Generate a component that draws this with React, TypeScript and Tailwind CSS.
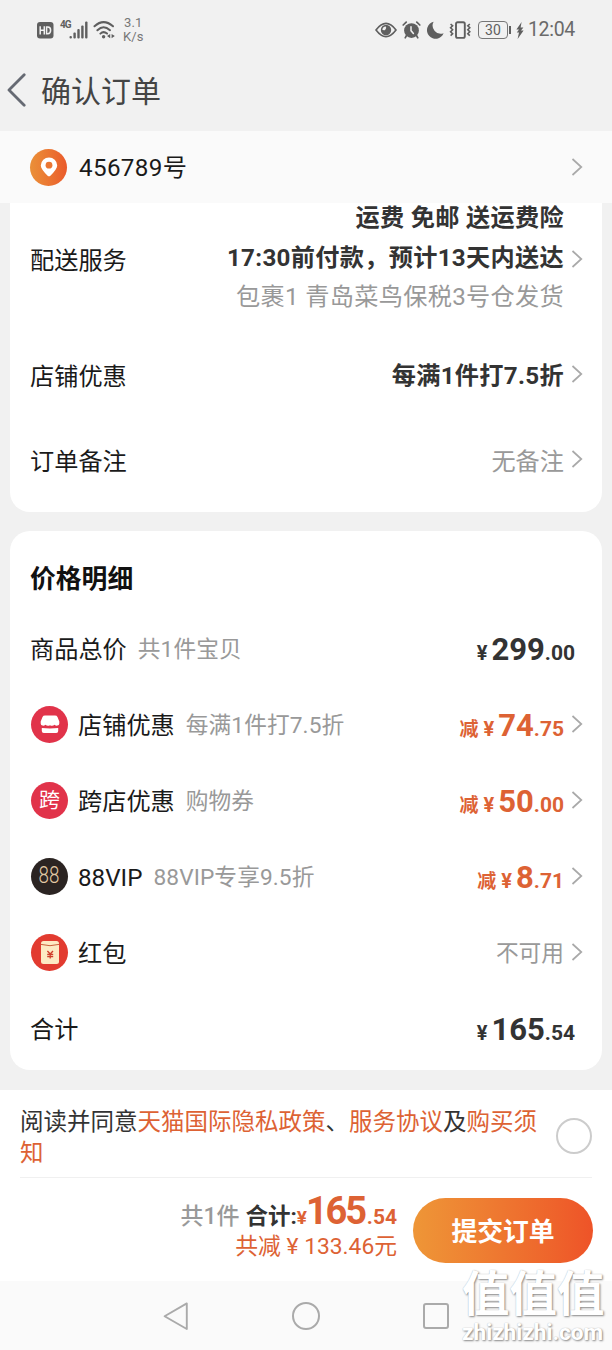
import type { ReactNode } from "react";

const ORANGE_TEXT = "text-[#dd6234]"

function IconChevron() {
  return (
    <svg width="12" height="18" viewBox="0 0 12 18" fill="none" stroke="#a9a9a9" strokeWidth="1.7" className="shrink-0">
      <path d="M1.5 1L10.3 9L1.5 17" />
    </svg>
  )
}

function StatusBar() {
  return (
    <div className="h-[60px] flex items-center pl-[37px] pr-[37px] text-[#5f5f5f]">
      {/* HD */}
      <svg width="17" height="18" viewBox="0 0 17 18" className="mr-[6px]">
        <rect x="0" y="1" width="16.5" height="16.5" rx="3" fill="#5f5f5f" />
        <path d="M3.2 5.2V13.4M7.3 5.2V13.4M3.2 9.2H7.3M9.6 5.9V12.7H10.9Q13.6 12.7 13.6 9.3Q13.6 5.9 10.9 5.9Z" fill="none" stroke="#f1f1f1" strokeWidth="1.5" />
      </svg>
      <span className="w-[9px] -mt-[11px] text-[10px] font-bold leading-none tracking-[-1px]">4G</span>
      {/* signal */}
      <svg width="19" height="18" viewBox="0 0 19 18" fill="#5f5f5f" className="mr-[5px]">
        <rect x="0.5" y="15" width="2.4" height="2.6" rx="1" />
        <rect x="4.4" y="11.4" width="2.4" height="6.2" rx="1" />
        <rect x="8.3" y="8" width="2.4" height="9.6" rx="1" />
        <rect x="12.2" y="4.4" width="2.4" height="13.2" rx="1" />
        <rect x="16.1" y="0.6" width="2.4" height="17" rx="1" />
      </svg>
      {/* wifi */}
      <svg width="23" height="18" viewBox="0 0 23 18" fill="none" stroke="#5f5f5f" strokeWidth="2" strokeLinecap="round" className="mr-[7px]">
        <path d="M1.5 5.3Q10.5 -3 20 5.3M4.4 9.2Q10.5 3.4 17 9.2M7.4 12.6Q10.5 9.6 14 12.6" />
        <circle cx="10.6" cy="15.8" r="1.7" fill="#5f5f5f" stroke="none" />
        <path d="M17.2 12.9V17.3L14 15.1ZM18.6 12.9V17.3L21.8 15.1Z" fill="#5f5f5f" stroke="none" />
      </svg>
      <div className="text-[13px] leading-[14.5px] tracking-[0.1px] text-center text-[#777]">
        <p>3.1</p>
        <p>K/s</p>
      </div>

      <div className="ml-auto flex items-center">
        {/* eye */}
        <svg width="22" height="16" viewBox="0 0 22 16" className="mr-[5px]">
          <path d="M1 8Q11 -5.2 21 8Q11 21.2 1 8Z" fill="none" stroke="#5f5f5f" strokeWidth="1.6" />
          <circle cx="11" cy="8" r="5.2" fill="#5f5f5f" />
          <path d="M10.4 4.2A2.2 2.2 0 0 1 7.2 7.6A4 4 0 0 1 10.4 4.2Z" fill="#f1f1f1" />
        </svg>
        {/* alarm */}
        <svg width="19" height="18" viewBox="0 0 19 18" fill="none" stroke="#5f5f5f" strokeWidth="1.7" strokeLinecap="round" className="mr-[6px]">
          <circle cx="9.5" cy="9.6" r="7.4" fill="#5f5f5f" stroke="none" />
          <path d="M1.2 4L4.2 1.2M17.8 4L14.8 1.2M4.5 14.5L3.2 16.8M14.5 14.5L15.8 16.8" />
          <path d="M9 5.8V9.6L11.4 12.4" stroke="#f1f1f1" strokeWidth="1.5" />
        </svg>
        {/* moon */}
        <svg width="17" height="18" viewBox="0 0 17 18" fill="#5f5f5f" className="mr-[5px]">
          <path d="M6.6 0.8A8.6 8.6 0 1 0 16.6 12.3A8.2 8.2 0 0 1 6.6 0.8Z" />
        </svg>
        {/* vibrate */}
        <svg width="23" height="18" viewBox="0 0 23 18" fill="none" stroke="#5f5f5f" strokeWidth="1.6" className="mr-[6px]">
          <rect x="7" y="1.3" width="8.8" height="15.6" rx="1.6" strokeWidth="1.9" />
          <path d="M1.6 3L3.6 4.8L1.6 6.8L3.6 8.8L1.6 10.8L3.6 12.8L1.6 14.6M20.8 3L18.8 4.8L20.8 6.8L18.8 8.8L20.8 10.8L18.8 12.8L20.8 14.6" />
        </svg>
        <div className="w-[30px] h-[18px] border-[1.5px] border-[#777] rounded-[4px] flex items-center justify-center text-[14px] leading-none">30</div>
        <div className="w-[2px] h-[8px] ml-[1px] mr-[5px] bg-[#5f5f5f]" />
        <svg width="8" height="17" viewBox="0 0 8 17" fill="#5f5f5f" className="mr-[4px]">
          <path d="M5.6 0L0.4 7.4H3L0.8 10.6H3L1.6 17L7.6 8.6H5L7.4 5.4H4.6Z" />
        </svg>
        <span className="text-[19.5px] leading-none tracking-[-0.3px] text-[#6a6a6a]">12:04</span>
      </div>
    </div>
  )
}

function Header() {
  return (
    <div className="h-[71px] flex items-center pb-[11px] pl-[6px] text-[#444]">
      <svg width="21" height="34" viewBox="0 0 21 34" fill="none" stroke="#666a73" strokeWidth="2.8" strokeLinecap="round" strokeLinejoin="round">
        <path d="M18.2 1.8L3 17L18.2 32.2" />
      </svg>
      <h1 className="ml-[14px] mt-[3px] text-[30px] leading-none">确认订单</h1>
    </div>
  )
}

function AddressBar() {
  return (
    <div className="h-[72px] bg-[#fafafa] flex items-center pl-[30px] pr-[29px]">
      <div className="size-[37px] rounded-full bg-linear-to-r from-[#ea9038] to-[#ea5a2b] flex items-center justify-center">
        <svg width="18" height="20" viewBox="0 0 18 20">
          <path d="M9 0.5A8.2 8.2 0 0 0 0.8 8.5Q0.8 12 7.6 18.7Q9 19.9 10.4 18.7Q17.2 12 17.2 8.5A8.2 8.2 0 0 0 9 0.5Z" fill="#fff" />
          <circle cx="9" cy="8.2" r="3.4" fill="#ea7633" />
        </svg>
      </div>
      <span className="ml-[12px] mt-[2px] text-[24.2px] leading-none tracking-[0.35px] text-[#1a1a1a]">456789号</span>
      <div className="ml-auto"><IconChevron /></div>
    </div>
  )
}

function ServiceCard() {
  return (
    <div className="mx-[10px] h-[309px] bg-white rounded-b-[20px] pl-[20px] pr-[19px] text-[24.2px] leading-none text-[#1a1a1a]">
      <div className="h-[111px] flex items-center">
        <span className="mt-[5px]">配送服务</span>
        <div className="ml-auto mr-[7px] text-right leading-[39.5px] tracking-[0.3px] whitespace-nowrap">
          <p className="font-bold text-[#333]">运费 免邮 送运费险</p>
          <p className="font-bold text-[#333]">17:30前付款，预计13天内送达</p>
          <p className="text-[#999]">包裹1 青岛菜鸟保税3号仓发货</p>
        </div>
        <IconChevron />
      </div>
      <div className="h-[123px] flex items-center">
        <span className="mt-[4px]">店铺优惠</span>
        <span className="ml-auto mr-[7px] mt-[2px] font-bold tracking-[0.3px] text-[#333]">每满1件打7.5折</span>
        <div className="-mt-[3px]"><IconChevron /></div>
      </div>
      <div className="h-[47px] flex items-center">
        <span className="mt-[3px]">订单备注</span>
        <span className="ml-auto mr-[7px] mt-[3px] text-[#999]">无备注</span>
        <div className="-mt-[3px]"><IconChevron /></div>
      </div>
    </div>
  )
}

function Price(props: { int: string, dec: string, prefix?: string }) {
  const { int, dec, prefix } = props
  return (
    <span className="flex items-baseline font-bold leading-none">
      {prefix && <span className="text-[19px] mr-[5px]">{prefix}</span>}
      <span className="text-[20px] mr-[4px]">¥</span>
      <span className="text-[31px]">{int}</span>
      <span className="text-[21px]">.{dec}</span>
    </span>
  )
}

function ShopIcon() {
  return (
    <div className="size-[37px] rounded-full bg-[#e1334a] flex items-center justify-center">
      <svg width="20" height="19" viewBox="0 0 20 19" fill="#fff">
        <path d="M5 0.6H15Q16.8 0.6 17.5 2L19.3 6.4V8.4Q19.3 10.4 17.4 10.6Q15.6 10.8 14.6 9.8Q12.4 11.6 10 10.2Q7.6 11.6 5.4 9.8Q4.4 10.8 2.6 10.6Q0.7 10.4 0.7 8.4V6.4L2.5 2Q3.2 0.6 5 0.6Z" />
        <path d="M1.8 13Q10 13.8 18.2 13V16Q18.2 18 16.2 18H3.8Q1.8 18 1.8 16Z" />
      </svg>
    </div>
  )
}

function CrossIcon() {
  return <div className="size-[37px] rounded-full bg-[#e1334a] flex items-center justify-center text-[21px] leading-none text-white">跨</div>
}

function VipIcon() {
  return (
    <div className="size-[37px] rounded-full bg-[#2b2422] flex items-center justify-center text-[23.5px] leading-none font-light text-[#e3c9a4]">
      <span className="scale-x-80">88</span>
    </div>
  )
}

function RedPacketIcon() {
  return (
    <div className="size-[37px] rounded-full bg-[#e23b30] flex items-center justify-center">
      <svg width="18" height="23" viewBox="0 0 18 23" fill="none">
        <rect x="0" y="0" width="18" height="23" rx="2.5" fill="#fdeac4" />
        <path d="M0 3.4Q9 6 18 3.4" stroke="#c9603c" strokeWidth="1" />
        <path d="M6.4 10L9.2 13L12 10M9.2 13V17.6M6.2 13.3H12.2M6.2 15.5H12.2" stroke="#cf3f2c" strokeWidth="1.3" />
      </svg>
    </div>
  )
}

function PriceRow(props: { label: string, note?: string, icon?: ReactNode, arrow?: boolean, children: ReactNode }) {
  const { label, note, icon, arrow, children } = props
  return (
    <div className={`h-[76px] flex items-center ${arrow ? "pr-[19px]" : "pr-[27px]"}`}>
      {icon && <div className="ml-[1px] mr-[10px] -mt-[2px]">{icon}</div>}
      <span className="mt-[3px] text-[24.2px] text-[#1a1a1a]">{label}</span>
      {note && <span className="ml-[11px] mt-[3px] text-[22.7px] tracking-[0.1px] text-[#999]">{note}</span>}
      <div className="ml-auto">{children}</div>
      {arrow && <div className="ml-[7px] -mt-[2px]"><IconChevron /></div>}
    </div>
  )
}

function PriceCard() {
  return (
    <div className="mx-[10px] mt-[19px] h-[539px] bg-white rounded-[20px] pl-[20px] leading-none">
      <h2 className="h-[80px] pt-[36px] text-[25.8px] leading-none font-bold text-[#111]">价格明细</h2>
      <PriceRow label="商品总价" note="共1件宝贝">
        <div className="text-[#333]"><Price int="299" dec="00" /></div>
      </PriceRow>
      <PriceRow label="店铺优惠" note="每满1件打7.5折" icon={<ShopIcon />} arrow>
        <div className={ORANGE_TEXT}><Price prefix="减" int="74" dec="75" /></div>
      </PriceRow>
      <PriceRow label="跨店优惠" note="购物券" icon={<CrossIcon />} arrow>
        <div className={ORANGE_TEXT}><Price prefix="减" int="50" dec="00" /></div>
      </PriceRow>
      <PriceRow label="88VIP" note="88VIP专享9.5折" icon={<VipIcon />} arrow>
        <div className={ORANGE_TEXT}><Price prefix="减" int="8" dec="71" /></div>
      </PriceRow>
      <PriceRow label="红包" icon={<RedPacketIcon />} arrow>
        <div className="mt-[3px] text-[22.7px] text-[#999]">不可用</div>
      </PriceRow>
      <PriceRow label="合计">
        <div className="text-[#333]"><Price int="165" dec="54" /></div>
      </PriceRow>
    </div>
  )
}

function Footer() {
  return (
    <div className="mt-[20px] h-[191px] bg-white px-[20px]">
      <div className="h-[88px] flex items-center border-b border-[#f0f0f0]">
        <p className="w-[520px] mt-[9px] text-[23.5px] leading-[31px] text-[#333]">
          阅读并同意<span className={ORANGE_TEXT}>天猫国际隐私政策</span>、<span className={ORANGE_TEXT}>服务协议</span>及<span className={ORANGE_TEXT}>购买须知</span>
        </p>
        <div className="ml-auto mt-[4px] size-[36px] shrink-0 rounded-full border-2 border-[#ccc]" />
      </div>
      <div className="h-[103px] flex justify-end">
        <div className="pt-[14px] mr-[16px] text-right whitespace-nowrap">
          <p className="flex items-baseline justify-end h-[38px] leading-[38px] text-[23px] font-bold">
            <span className="font-medium text-[#999] mr-[6px]">共1件</span>
            <span className="text-[#333] text-[22.5px]">合计:</span>
            <span className={`${ORANGE_TEXT} text-[19px]`}>¥</span>
            <span className={`${ORANGE_TEXT} text-[38px] -ml-[1px] tracking-[-2.2px]`}>165</span>
            <span className={`${ORANGE_TEXT} text-[21px] ml-[2px]`}>.54</span>
          </p>
          <p className={`${ORANGE_TEXT} text-[22.8px] leading-[34px]`}>共减 ¥ 133.46元</p>
        </div>
        <button className="-mr-[1px] mt-[20px] w-[180px] h-[65px] pt-[5px] rounded-full bg-linear-to-r from-[#ee9637] via-[#ee7630] to-[#ee5328] text-white text-[25.8px] leading-none font-bold">
          提交订单
        </button>
      </div>
    </div>
  )
}

function NavBar() {
  return (
    <div className="h-[69px] bg-[#fafafa] flex items-center pl-[163px]">
      <svg width="26" height="30" viewBox="0 0 26 30" fill="none" stroke="#aaa" strokeWidth="1.9" strokeLinejoin="round">
        <path d="M1.6 15.2L23.8 2.4V28Z" />
      </svg>
      <div className="ml-[103px] size-[28px] rounded-full border-2 border-[#aaa]" />
      <div className="ml-[103px] size-[26px] rounded-[3px] border-2 border-[#aaa]" />
    </div>
  )
}

function Watermark() {
  return (
    <div className="absolute left-[462px] top-[1270px] text-white whitespace-nowrap [text-shadow:1px_1px_2px_#888,0_0_1px_#bbb]">
      <p className="text-[47.5px] leading-[50px] font-bold">值值值</p>
      <p className="text-[22.6px] leading-[26px] font-bold">zhizhizhi.com</p>
    </div>
  )
}

function App() {
  return (
    <div className="relative w-[612px] h-[1350px] overflow-hidden bg-[#f1f1f1] font-[Roboto,'Noto_Sans_CJK_SC',sans-serif]">
      <StatusBar />
      <Header />
      <AddressBar />
      <ServiceCard />
      <PriceCard />
      <Footer />
      <NavBar />
      <Watermark />
    </div>
  )
}

export default App
